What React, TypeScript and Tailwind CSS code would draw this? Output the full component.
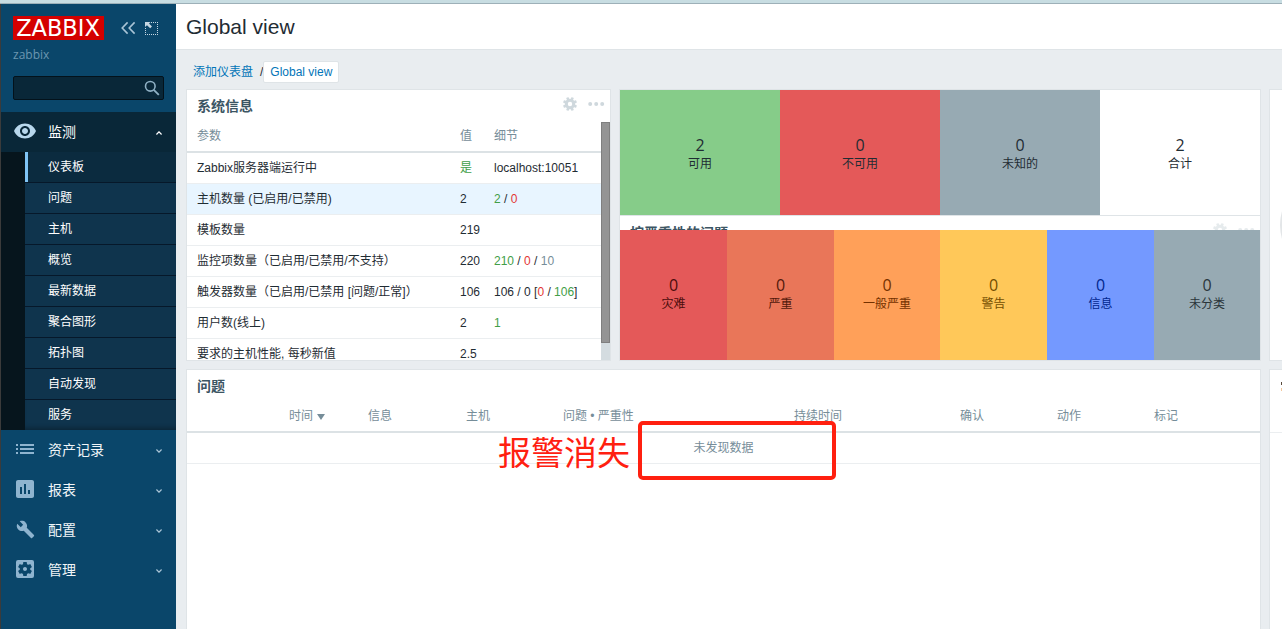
import type { ReactNode } from 'react'
import { MdAssessment, MdBuild, MdList, MdSettingsApplications, MdVisibility } from 'react-icons/md'

const SUB_MENU = ['仪表板', '问题', '主机', '概览', '最新数据', '聚合图形', '拓扑图', '自动发现', '服务']

const MENU = [
  { label: '资产记录', icon: MdList, size: 24 },
  { label: '报表', icon: MdAssessment, size: 24 },
  { label: '配置', icon: MdBuild, size: 19 },
  { label: '管理', icon: MdSettingsApplications, size: 24 },
]

const HOSTS = [
  { count: 2, label: '可用', className: 'w-40 bg-[#86cc89] pt-[2px]' },
  { count: 0, label: '不可用', className: 'w-40 bg-[#e45959] pt-[2px]' },
  { count: 0, label: '未知的', className: 'w-40 bg-[#97aab3] pt-[2px]' },
  { count: 2, label: '合计', className: 'w-40 bg-white pt-[2px]' },
]

const SEVERITIES = [
  { count: 0, label: '灾难', className: 'w-[107px] bg-[#e45959] pb-[2px] text-[#4b0c0c]' },
  { count: 0, label: '严重', className: 'w-[107px] bg-[#e97659] pb-[2px] text-[#52190b]' },
  { count: 0, label: '一般严重', className: 'w-[106px] bg-[#ffa059] pb-[2px] text-[#733100]' },
  { count: 0, label: '警告', className: 'w-[107px] bg-[#ffc859] pb-[2px] text-[#734d00]' },
  { count: 0, label: '信息', className: 'w-[107px] bg-[#7499ff] pb-[2px] text-[#00268e]' },
  { count: 0, label: '未分类', className: 'w-[106px] bg-[#97aab3] pb-[2px] text-[#2a353a]' },
]

const green = (text: string) => <span className="text-[#429e47]">{text}</span>
const red = (text: string) => <span className="text-[#e33734]">{text}</span>
const grey = (text: string) => <span className="text-[#768d99]">{text}</span>

const SYSTEM_ROWS: { name: string; value: ReactNode; details?: ReactNode }[] = [
  { name: 'Zabbix服务器端运行中', value: green('是'), details: 'localhost:10051' },
  { name: '主机数量 (已启用/已禁用)', value: '2', details: <>{green('2')} / {red('0')}</> },
  { name: '模板数量', value: '219' },
  { name: '监控项数量（已启用/已禁用/不支持）', value: '220', details: <>{green('210')} / {red('0')} / {grey('10')}</> },
  { name: '触发器数量（已启用/已禁用 [问题/正常]）', value: '106', details: <>106 / 0 [{red('0')} / {green('106')}]</> },
  { name: '用户数(线上)', value: '2', details: green('1') },
  { name: '要求的主机性能, 每秒新值', value: '2.5' },
]

function Chevron({ up = false }: { up?: boolean }) {
  return (
    <svg className="mt-[2px]" width="6" height="4" viewBox="0 0 6 4" fill="none" stroke={up ? '#ffffff' : '#a9c4d6'} strokeWidth="1.3">
      <path d={up ? 'M0.4 3.5 3 0.9l2.6 2.6' : 'M0.4 0.5 3 3.1 5.6 0.5'} />
    </svg>
  )
}

function WidgetActions() {
  return (
    <svg width="42" height="14" viewBox="0 0 42 14" fill="#cfd8dd">
      <path fillRule="evenodd" d="M7 1.8a5.2 5.2 0 1 0 0 10.4A5.2 5.2 0 0 0 7 1.8zm0 3a2.2 2.2 0 1 1 0 4.4 2.2 2.2 0 0 1 0-4.4z" />
      {[22.5, 67.5, 112.5, 157.5, 202.5, 247.5, 292.5, 337.5].map(a => (
        <rect key={a} x="5.7" y="0" width="2.6" height="3" rx="0.5" transform={`rotate(${a} 7 7)`} />
      ))}
      <circle cx="27.2" cy="7" r="2" />
      <circle cx="33.2" cy="7" r="2" />
      <circle cx="39.2" cy="7" r="2" />
    </svg>
  )
}

function Tile({ count, label, className }: { count: number; label: string; className: string }) {
  return (
    <div className={`flex shrink-0 flex-col items-center justify-center ${className}`}>
      <span className="font-['Open_Sans','Noto_Sans_CJK_SC',sans-serif] text-[16px] leading-5">{count}</span>
      <span className="leading-[18px]">{label}</span>
    </div>
  )
}

function Sidebar() {
  return (
    <aside className="flex w-[176px] shrink-0 flex-col border-l border-[#3b3b3b] bg-[#0a466a] text-white">
      <div className="h-[108px] px-3 pt-3">
        <div className="flex h-6 items-center">
          <div className="flex h-6 w-[91px] items-center justify-center bg-[#d40000] pr-px font-['DejaVu_Sans',sans-serif] text-[22.5px] leading-6">
            ZABBIX
          </div>
          <svg className="ml-[17px]" width="15" height="14" viewBox="0 0 15 14" fill="none" stroke="#a9c4d6" strokeWidth="1.6">
            <path d="M6.6 1.4 1.2 7l5.4 5.6M13.6 1.4 8.2 7l5.4 5.6" />
          </svg>
          <svg className="ml-[9px]" width="13" height="13" viewBox="0 0 13 13" fill="none">
            <path d="M6 .5h7M12.5 2v11M.5 6v7M2 12.5h11" stroke="#c5d7e3" strokeDasharray="1 1" />
            <path d="M0 0h5.5L4 1.5 7 4.5 5.2 6.3 2 3.3 0 5z" fill="#c5d7e3" />
          </svg>
        </div>
        <div className="mt-[6px] leading-[18px] text-[#6c97b1]">
          <span className="font-['Open_Sans',sans-serif]">zabbix</span>
        </div>
        <div className="mt-3 flex h-6 w-[151px] items-center justify-end rounded-[2px] border border-[#03121b] bg-[#092738] pr-[3px]">
          <svg width="16" height="16" viewBox="0 0 16 16" fill="none" stroke="#8fb0c4">
            <circle cx="6.3" cy="6.3" r="4.8" strokeWidth="1.6" />
            <path d="m9.8 9.8 5 5" strokeWidth="1.9" />
          </svg>
        </div>
      </div>

      <div className="flex h-10 items-center bg-[#092738] pl-3 pr-[14px] text-sm">
        <MdVisibility size={24} color="#b8d7ec" className="-mt-[2px]" />
        <span className="ml-[11px] flex-1">监测</span>
        <Chevron up />
      </div>
      <ul className="h-[278px] bg-[#06151d] pl-6">
        {SUB_MENU.map((item, i) => (
          <li
            key={item}
            className={`flex items-center ${
              i === 8 ? 'h-[30px] shadow-[inset_0_-5px_5px_-3px_rgba(0,0,0,0.3)]' : 'h-[31px] border-b border-b-[#06182a]'
            } ${
              i === 0
                ? 'bg-[#0b2b3f] bg-[linear-gradient(#7fc4f5,#7fc4f5)] bg-[length:3px_100%] bg-no-repeat pl-[23px]'
                : 'bg-[#0f344d] pl-[23px]'
            }`}
          >
            {item}
          </li>
        ))}
      </ul>
      {MENU.map(({ label, icon: Icon, size }) => (
        <div key={label} className="flex h-10 items-center pl-3 pr-[14px] text-sm text-[#f0f5f8]">
          <span className="-mt-[2px] flex w-6 justify-center">
            <Icon size={size} color="#8fb4cf" />
          </span>
          <span className="ml-[11px] flex-1">{label}</span>
          <Chevron />
        </div>
      ))}
    </aside>
  )
}

function SystemInfo() {
  return (
    <section className="flex h-[272px] w-[425px] shrink-0 flex-col overflow-hidden border border-[#dfe4e7] bg-white">
      <div className="flex h-8 shrink-0 items-center justify-between pl-[10px] pr-[5px]">
        <h2 className="text-sm font-bold text-[#3c5563]">系统信息</h2>
        <div className="-mt-1"><WidgetActions /></div>
      </div>
      <div className="flex min-h-0 flex-1">
        <div className="flex-1 overflow-hidden">
          <div className="flex h-[31px] items-center border-b-2 border-[#dce2e5] pb-[2px] pl-[10px] text-[#768d99]">
            <span className="w-[263px] shrink-0">参数</span>
            <span className="w-[34px] shrink-0">值</span>
            <span>细节</span>
          </div>
          {SYSTEM_ROWS.map((row, i) => (
            <div
              key={row.name}
              className={`flex h-[31px] items-center whitespace-nowrap border-b border-[#ebeef0] pl-[10px] ${i === 1 ? 'bg-[#e8f5ff]' : ''}`}
            >
              <span className="w-[263px] shrink-0">{row.name}</span>
              <span className="w-[34px] shrink-0">{row.value}</span>
              <span>{row.details}</span>
            </div>
          ))}
        </div>
        <div className="w-[9px] shrink-0 bg-[#d4dce0]">
          <div className="h-[221px] border border-[#7f7f7f] bg-[#949494]" />
        </div>
      </div>
    </section>
  )
}

function Problems() {
  return (
    <section className="relative w-[1075px] shrink-0 border border-b-0 border-[#dfe4e7] bg-white">
      <h2 className="flex h-8 items-center pl-[10px] text-sm font-bold text-[#3c5563]">问题</h2>
      <div className="flex h-[31px] items-center border-b-2 border-[#dce2e5] pb-[2px] pl-[102px] text-[#768d99]">
        <span className="flex w-[79px] items-center gap-[4px]">
          时间
          <svg className="mt-[2px]" width="8" height="6" viewBox="0 0 8 6" fill="#768d99"><path d="M0 0h8L4 6z" /></svg>
        </span>
        <span className="w-[98px]">信息</span>
        <span className="w-[97px]">主机</span>
        <span className="w-[231px]">问题 • 严重性</span>
        <span className="w-[166px]">持续时间</span>
        <span className="w-[97px]">确认</span>
        <span className="w-[97px]">动作</span>
        <span>标记</span>
      </div>
      <div className="flex h-[31px] items-center justify-center border-b border-[#ebeef0] text-[#768d99]">
        未发现数据
      </div>

      {/* Annotation drawn over the table */}
      <div className="absolute left-[311px] top-[61px] text-[33px] leading-[46px] text-[#ff2010]">报警消失</div>
      <div className="absolute left-[451px] top-[51px] h-[59px] w-[198px] rounded-[5px] border-4 border-[#ff2010]" />
    </section>
  )
}

export default function App() {
  return (
    <div className="flex h-[629px] w-[1282px] flex-col overflow-hidden bg-[#e9edf0] font-['Liberation_Sans','Noto_Sans_CJK_SC',sans-serif] text-xs text-[#1f2c33]">
      <div className="h-1 shrink-0 border-b border-[#9db0b8] bg-[#c8dde2]" />
      <div className="flex min-h-0 flex-1">
        <Sidebar />
        <main className="flex min-w-0 flex-1 flex-col overflow-hidden">
          <header className="flex h-[46px] shrink-0 items-center border-b border-[#dfe4e7] bg-white pl-[10px]">
            <h1 className="text-[21px] leading-6">Global view</h1>
          </header>
          <nav className="flex h-[39px] shrink-0 items-center pl-[17px] pt-[4px] text-[#0275b8]">
            <span>添加仪表盘</span>
            <span className="ml-[7px] text-[#1f2c33]">/</span>
            <span className="flex h-[22px] w-[76px] items-center justify-center rounded-[2px] border border-[#dfe4e7] bg-white">
              Global view
            </span>
          </nav>

          <div className="flex shrink-0 gap-2 pl-[10px]">
            <SystemInfo />
            <div className="flex h-[272px] w-[642px] shrink-0 flex-col border border-[#dfe4e7] bg-white">
              <div className="flex h-[125px]">
                {HOSTS.map(tile => <Tile key={tile.label} {...tile} />)}
              </div>
              {/* Widget header partly covered by its tiles */}
              <div className="h-[15px] overflow-hidden border-t border-[#dfe4e7]">
                <div className="flex h-8 items-center justify-between pl-[10px] pr-[5px]">
                  <h2 className="pt-px text-sm font-bold text-[#3c5563]">按严重性的问题</h2>
                  <div className="-mt-1 opacity-50"><WidgetActions /></div>
                </div>
              </div>
              <div className="flex h-[130px]">
                {SEVERITIES.map(tile => <Tile key={tile.label} {...tile} />)}
              </div>
            </div>
            <div className="flex h-[272px] w-[40px] shrink-0 items-center overflow-hidden border border-[#dfe4e7] bg-white pl-[10px]">
              <svg width="100" height="100" viewBox="0 0 100 100" className="shrink-0">
                <circle cx="50" cy="50" r="50" fill="#e3e6e8" />
              </svg>
            </div>
          </div>

          <div className="mt-2 flex min-h-0 flex-1 gap-2 pl-[10px]">
            <Problems />
            <section className="w-[40px] shrink-0 border border-b-0 border-[#dfe4e7] bg-white">
              <div className="flex h-[63px] items-start overflow-hidden border-b border-[#ebeef0] pl-[11px] pt-[12px]">
                <div className="h-[9px] w-[3px] border-y-[3px] border-b-[#f3c79c] border-t-[#5a4a3c]" />
              </div>
            </section>
          </div>
        </main>
      </div>
    </div>
  )
}
